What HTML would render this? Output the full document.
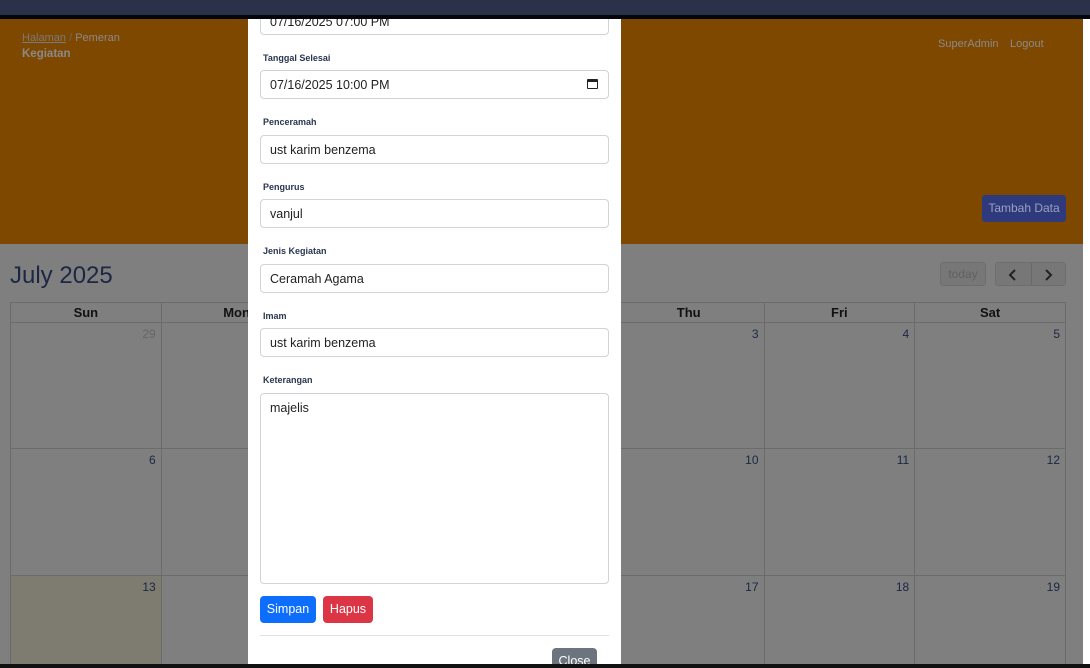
<!DOCTYPE html>
<html style="width:1090px;height:668px;overflow:hidden"><head><style>
*{box-sizing:border-box;margin:0;padding:0}
body{width:1090px;height:668px;overflow:hidden;position:relative;background:#7f7f7f;font-family:"Liberation Sans",sans-serif}
.abs{position:absolute}
.top{left:0;top:0;width:1090px;height:15px;background:#2c314a;z-index:5}
.blk{left:0;top:15px;width:1090px;height:4px;background:#05060c;z-index:5}
.hdr{left:0;top:19px;width:1083px;height:225px;background:#7f4800}
.sb{left:1083px;top:19px;width:7px;height:645px;background:#fff}
.bot{left:0;top:664px;width:1090px;height:4px;background:#111;z-index:5}
.t{color:#8a8a8a;font-size:11px}
.cal{left:10px;top:302px;width:1056px;height:362px;overflow:hidden}
table{border-collapse:collapse;width:1056px;table-layout:fixed}
td,th{border:1px solid #6b6b6b}
th{height:20px;font-size:13px;color:#111;font-weight:bold}
td{vertical-align:top;text-align:right;font-size:12px;color:#1a2744;padding:4px 5px}
.modal{left:248px;top:19px;width:373px;height:645px;background:#fff;overflow:hidden;z-index:3}
.lab{position:absolute;left:15px;font-size:9px;font-weight:bold;color:#2a3550}
.inp{position:absolute;left:12px;width:349px;height:29px;border:1px solid #ced4da;border-radius:4px;font-size:12.5px;color:#222;padding:7px 9px}
.btn{position:absolute;color:#fff;font-size:12.5px;border-radius:4px;text-align:center;line-height:27px;height:27px}
</style></head><body>
<div class="abs top"></div><div class="abs blk"></div>
<div class="abs hdr">
<div class="abs t" style="left:22px;top:13px"><span style="text-decoration:underline;color:#7a7a7a">Halaman</span> <span style="color:#6a6a6a">/</span> Pemeran</div>
<div class="abs t" style="left:22px;top:29px;font-weight:bold;font-size:11.5px">Kegiatan</div>
<div class="abs t" style="left:938px;top:19px">SuperAdmin</div>
<div class="abs t" style="left:1010px;top:19px">Logout</div>
<div class="abs" style="left:982px;top:176px;width:84px;height:27px;background:#2f3a7d;border-radius:3px;color:#9aa0c0;font-size:12px;text-align:center;line-height:27px">Tambah Data</div>
</div>
<div class="abs" style="left:10px;top:262px;font-size:24px;color:#1b2744">July 2025</div>
<div class="abs" style="left:940px;top:262px;width:46px;height:24px;border:1px solid #6e6e6e;border-radius:3px;background:#777;color:#606060;font-size:12px;text-align:center;line-height:22px">today</div>
<div class="abs" style="left:995px;top:262px;width:71px;height:24px;border:1px solid #6e6e6e;border-radius:3px;background:#777">
<svg class="abs" style="left:12px;top:6px" width="10" height="12" viewBox="0 0 10 12"><path d="M7 1 L2 6 L7 11" fill="none" stroke="#222" stroke-width="2"/></svg>
<span class="abs" style="left:35px;top:0;width:1px;height:22px;background:#6a6a6a"></span>
<svg class="abs" style="left:47px;top:6px" width="10" height="12" viewBox="0 0 10 12"><path d="M3 1 L8 6 L3 11" fill="none" stroke="#222" stroke-width="2"/></svg>
</div>
<div class="abs cal"><table>
<tr><th>Sun</th><th>Mon</th><th>Tue</th><th>Wed</th><th>Thu</th><th>Fri</th><th>Sat</th></tr>
<tr style="height:126px"><td style="color:#666">29</td><td>30</td><td>1</td><td>2</td><td>3</td><td>4</td><td>5</td></tr>
<tr style="height:127px"><td>6</td><td>7</td><td>8</td><td>9</td><td>10</td><td>11</td><td>12</td></tr>
<tr style="height:127px"><td style="background:#7e7c70">13</td><td>14</td><td>15</td><td>16</td><td>17</td><td>18</td><td>19</td></tr>
</table></div>
<div class="abs sb"></div>
<div class="abs modal">
<div class="inp" style="top:-13px;height:29px;padding-top:8px">07/16/2025 07:00 PM</div>
<div class="lab" style="top:34px">Tanggal Selesai</div>
<div class="inp" style="top:51px">07/16/2025 10:00 PM<span style="position:absolute;right:10px;top:8px;width:11px;height:10px;border:1.5px solid #222;border-top-width:3px;border-radius:1px"></span></div>
<div class="lab" style="top:98px">Penceramah</div>
<div class="inp" style="top:116px">ust karim benzema</div>
<div class="lab" style="top:163px">Pengurus</div>
<div class="inp" style="top:180px">vanjul</div>
<div class="lab" style="top:227px">Jenis Kegiatan</div>
<div class="inp" style="top:245px">Ceramah Agama</div>
<div class="lab" style="top:292px">Imam</div>
<div class="inp" style="top:309px">ust karim benzema</div>
<div class="lab" style="top:356px">Keterangan</div>
<div class="inp" style="top:374px;height:191px">majelis</div>
<div class="btn" style="left:12px;top:577px;width:56px;background:#0d6efd">Simpan</div>
<div class="btn" style="left:75px;top:577px;width:50px;background:#dc3545">Hapus</div>
<div class="abs" style="left:12px;top:616px;width:349px;height:1px;background:#dee2e6"></div>
<div class="btn" style="left:304px;top:629px;width:45px;background:#6c757d">Close</div>
</div>
<div class="abs bot"></div>
</body></html>
